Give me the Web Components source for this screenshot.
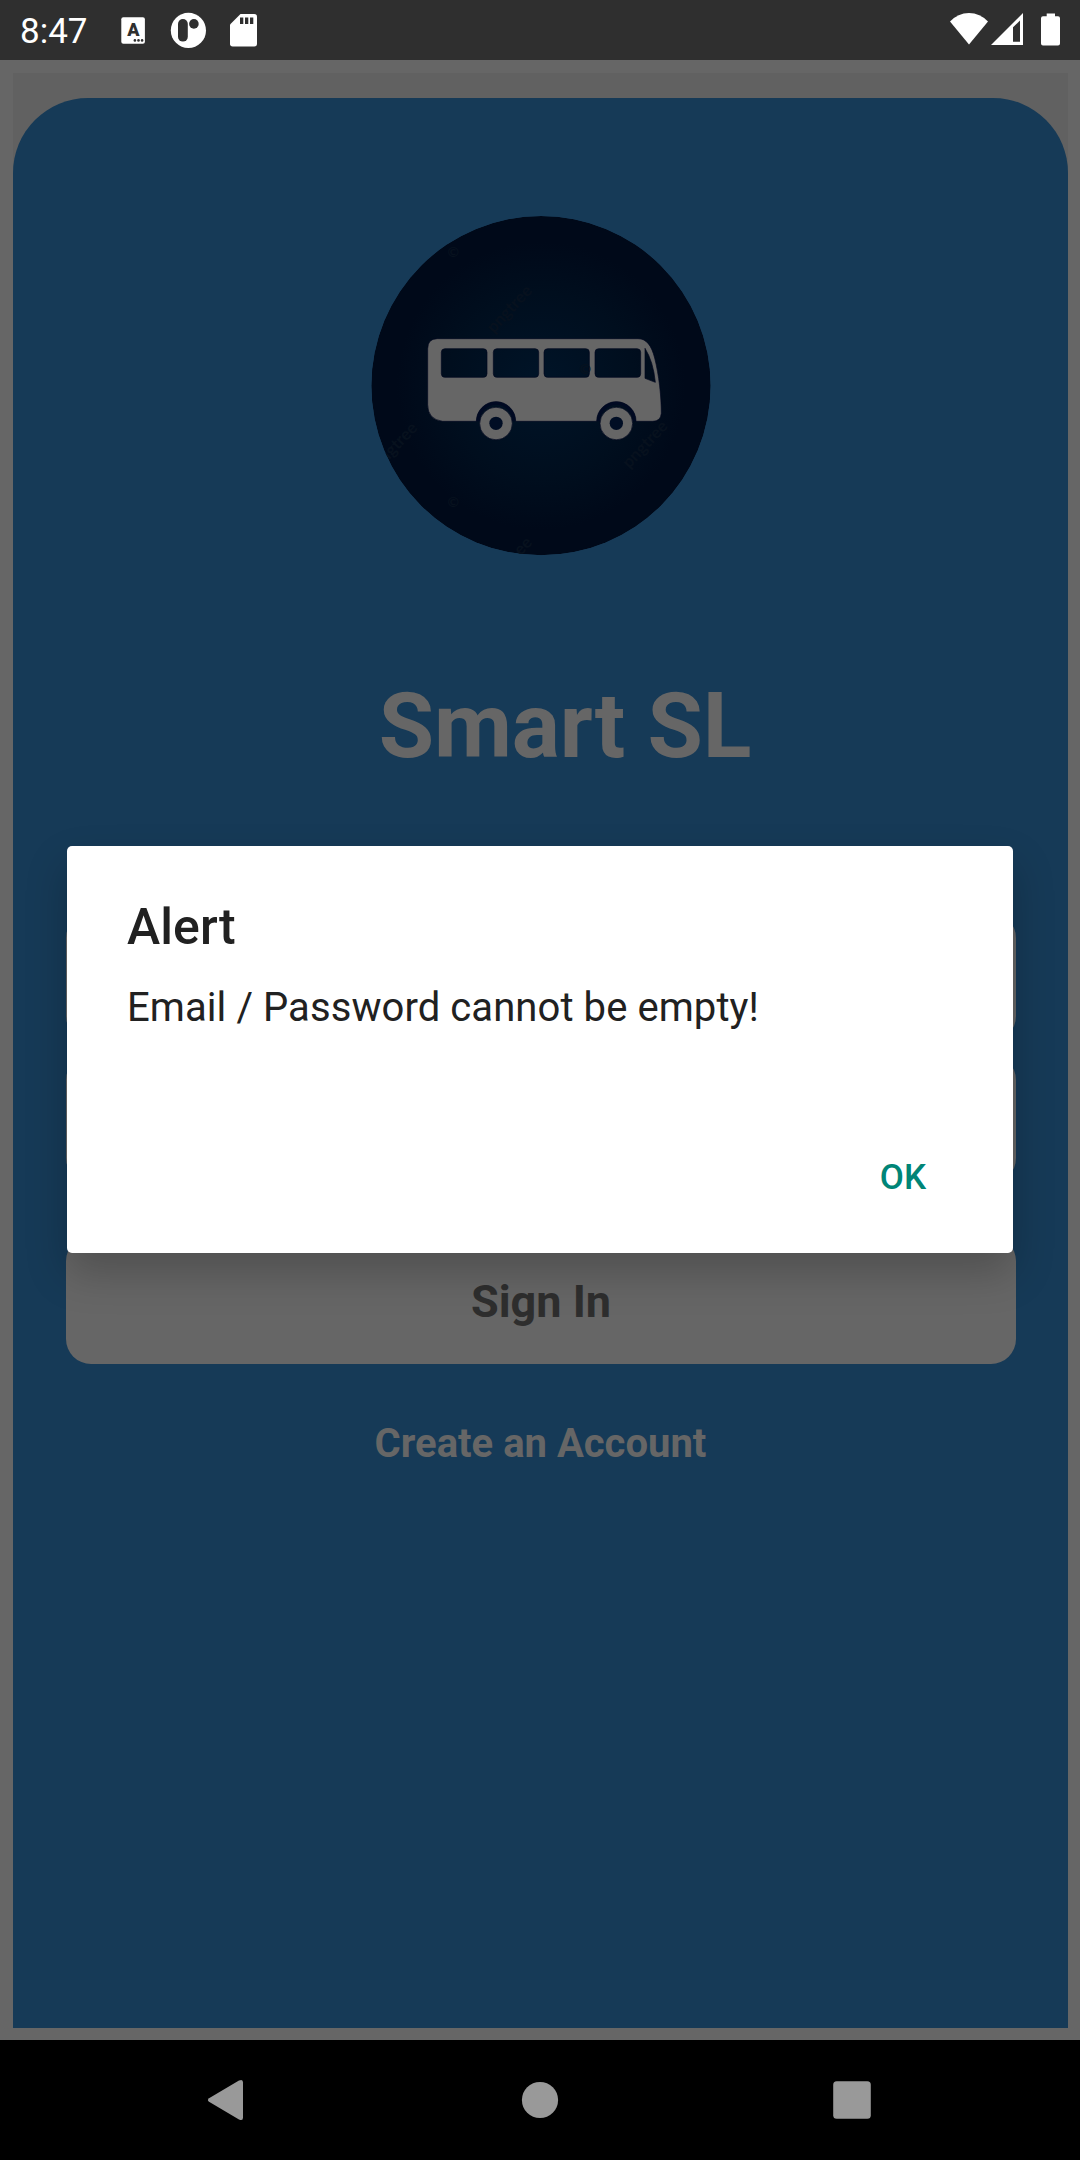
<!DOCTYPE html>
<html lang="en">
<head>
<meta charset="utf-8">
<title>Smart SL</title>
<style>
html,body{margin:0;padding:0}
body{font-family:Roboto,"Liberation Sans",sans-serif;width:1080px;height:2160px;overflow:hidden;background:#666}
</style>
</head>
<body>
<phone-screen>
  <status-bar slot="status">8:47</status-bar>
  <login-panel slot="app">
    <bus-logo slot="logo"></bus-logo>
    <span slot="title">Smart SL</span>
    <input-field slot="fields"></input-field>
    <input-field slot="fields"></input-field>
    <sign-button slot="action">Sign In</sign-button>
    <span slot="link">Create an Account</span>
  </login-panel>
  <nav-bar slot="nav"></nav-bar>
  <alert-dialog slot="dialog">
    <span slot="title">Alert</span>
    <span slot="message">Email / Password cannot be empty!</span>
    <span slot="button">OK</span>
  </alert-dialog>
</phone-screen>
<script>
const define = (name, html) => {
  const t = document.createElement('template');
  t.innerHTML = html;
  customElements.define(name, class extends HTMLElement {
    constructor() {
      super();
      this.attachShadow({mode: 'open'}).append(t.content.cloneNode(true));
    }
  });
};

define('phone-screen', `
<style>
:host{display:flex;flex-direction:column;position:relative;width:1080px;height:2160px;background:#666}
main{flex:1;display:flex;padding:13px 12px 12px 13px;box-sizing:border-box}
</style>
<slot name="status"></slot><main><slot name="app"></slot></main><slot name="nav"></slot><slot name="dialog"></slot>`);

define('status-bar', `
<style>
:host{display:flex;align-items:center;justify-content:space-between;height:60px;background:#2f2f2f;color:#fff;font-size:35px;line-height:40px}
.left{display:flex;align-items:center}
.time{width:100px;padding:3px 0 0 20px;box-sizing:border-box}
svg{display:block}
</style>
<div class="left"><div class="time"><slot></slot></div>
<svg width="180" height="60" viewBox="100 0 180 60">
  <rect x="121.3" y="17.2" width="23.6" height="26.6" rx="2" fill="#fff"/>
  <text x="133.3" y="36.3" text-anchor="middle" font-family="Roboto" font-weight="900" font-size="18" fill="#2f2f2f">A</text>
  <g fill="#2f2f2f"><circle cx="134.9" cy="40.4" r="1.3"/><circle cx="138.5" cy="40.4" r="1.3"/><circle cx="142.1" cy="40.4" r="1.3"/></g>
  <circle cx="188.4" cy="30.4" r="17.6" fill="#fff"/>
  <rect x="178" y="19" width="9.8" height="22.6" rx="4.9" fill="#2f2f2f"/>
  <circle cx="193.9" cy="23.9" r="4.8" fill="#2f2f2f"/>
  <path d="M240.5 14H254.3Q257 14 257 16.7V43.8Q257 46.5 254.3 46.5H232.7Q230 46.5 230 43.8V24.5Z" fill="#fff"/>
  <path d="M240 17.5h3.3v6.5h-3.3zM245 17.5h3.3v6.5h-3.3zM250 17.5h3.3v6.5h-3.3z" fill="#2f2f2f"/>
</svg></div>
<svg width="140" height="60" viewBox="940 0 140 60">
  <g fill="#fff">
  <path d="M950 21.6Q958 13 969 13T988 21.6L969 44.6Z"/>
  <path fill-rule="evenodd" d="M991 45L1023 13V45ZM1013 27.3V41.7H1020V20.6Z"/>
  <path d="M1046.7 13.4H1055V16.2H1058Q1060 16.2 1060 18.2V43.5Q1060 45.5 1058 45.5H1043Q1041 45.5 1041 43.5V18.2Q1041 16.2 1043 16.2H1046.7Z"/>
  </g>
</svg>`);

define('login-panel', `
<style>
:host{display:block;flex:1;background:#616161;padding-top:25px;box-sizing:border-box}
.card{display:flex;flex-direction:column;height:100%;box-sizing:border-box;background:#163a57;border-radius:75px 75px 0 0;padding:117px 52px 0 53px;color:#666;font-weight:700}
.logo{display:flex;justify-content:center}
.title{margin-top:117px;padding-left:48px;text-align:center;font-size:90px;line-height:106px;letter-spacing:-.12px;white-space:nowrap}
.fields{display:flex;flex-direction:column;gap:14px;margin:133px 0 53px}
.link{margin-top:56px;padding-right:1px;text-align:center;font-size:40px;line-height:48px}
</style>
<div class="card">
<div class="logo"><slot name="logo"></slot></div>
<div class="title"><slot name="title"></slot></div>
<div class="fields"><slot name="fields"></slot></div>
<slot name="action"></slot>
<div class="link"><slot name="link"></slot></div>
</div>`);

define('bus-logo', `
<style>:host{display:block}svg{display:block}</style>
<svg width="342" height="342" viewBox="60 45 1026 1026">
<defs>
<radialGradient id="g"><stop offset="0" stop-color="#001428"/><stop offset=".55" stop-color="#000e1e"/><stop offset=".85" stop-color="#000919"/><stop offset="1" stop-color="#000919"/></radialGradient>
<clipPath id="c"><circle cx="573" cy="557" r="509"/></clipPath>
</defs>
<g clip-path="url(#c)">
<circle cx="573" cy="557" r="509" fill="url(#g)"/>
<g fill="#07111e" font-family="Lato" font-size="50">
<text text-anchor="middle" transform="translate(490 338) rotate(-47)">pngtree</text>
<text text-anchor="end" transform="translate(205 686) rotate(-47)">ngtree</text>
<text text-anchor="middle" transform="translate(897 744) rotate(-47)">pngtree</text>
<text text-anchor="end" transform="translate(549 1030) rotate(-47)">ee</text>
<text text-anchor="middle" x="310" y="171" font-size="42">©</text><text text-anchor="middle" x="310" y="921" font-size="42">©</text>
</g>
<path fill="#666" stroke="#000820" stroke-width="2" fill-rule="evenodd" d="M262 416H864C890 416 905 438 914 474C927 525 934 590 934 640Q932 664 908 664H858A59 59 0 0 0 740 664H497A59 59 0 0 0 379 664H278Q233 658 233 614V446Q233 416 262 416ZM285 446Q274 446 274 457V521Q274 532 285 532H400Q411 532 411 521V457Q411 446 400 446ZM441 446Q430 446 430 457V521Q430 532 441 532H555Q566 532 566 521V457Q566 446 555 446ZM593 446Q582 446 582 457V521Q582 532 593 532H707Q718 532 718 521V457Q718 446 707 446ZM746 446Q735 446 735 457V521Q735 532 746 532H861Q872 532 872 521V457Q872 446 861 446ZM885 445V535L916 547Q910 485 885 445Z"/>
<path fill="none" stroke="#000922" stroke-width="9" d="M384 664A54 54 0 0 1 492 664M745 664A54 54 0 0 1 853 664"/>
<g fill="#666" stroke="#000820" stroke-width="2"><circle cx="438" cy="670.500" r="49"/><circle cx="799" cy="670.500" r="49"/></g>
<g fill="#000d24"><circle cx="438" cy="670" r="20"/><circle cx="799" cy="670" r="20"/></g>
<text x="706" y="522" font-size="42" font-family="Lato" text-anchor="middle" fill="#07111e">©</text>
</g>
</svg>`);

define('input-field', `
<style>:host{display:block;height:128px;box-sizing:border-box;border:3px solid #666;border-radius:25px;background:#515151}</style>`);

define('sign-button', `
<style>:host{display:flex;align-items:center;justify-content:center;height:128px;padding-top:3px;box-sizing:border-box;border-radius:25px;background:#666;color:#2e2e2e;font-size:45px;line-height:54px}</style><slot></slot>`);

define('alert-dialog', `
<style>
:host{display:flex;flex-direction:column;position:absolute;left:67px;top:846px;width:946px;height:407px;box-sizing:border-box;padding:51px 60px 0;background:#fff;border-radius:5px;box-shadow:0 20px 42px rgba(0,0,0,.22);color:#212121}
.t{font-size:50px;line-height:60px;letter-spacing:.1px;font-weight:500}
.m{margin-top:27px;font-size:40px;line-height:48px;letter-spacing:.08px;white-space:nowrap}
.b{display:flex;justify-content:flex-end;margin-top:126px;padding-right:27px;font-size:35px;line-height:40px;font-weight:500;color:#008577}
</style>
<div class="t"><slot name="title"></slot></div>
<div class="m"><slot name="message"></slot></div>
<div class="b"><slot name="button"></slot></div>`);

define('nav-bar', `
<style>:host{display:flex;align-items:center;height:120px;background:#000}svg{display:block}</style>
<svg width="1080" height="120" viewBox="0 0 1080 120"><g fill="#999">
<path d="M239 40.600Q243 38.500 243 42.500V77.500Q243 81.500 239 79.400L209 61.800Q206.800 60 209 58.200Z"/>
<circle cx="540" cy="60" r="18.100"/><rect x="833.200" y="41.200" width="37.600" height="37.600" rx="3.500"/></g></svg>`);
</script>
</body>
</html>
